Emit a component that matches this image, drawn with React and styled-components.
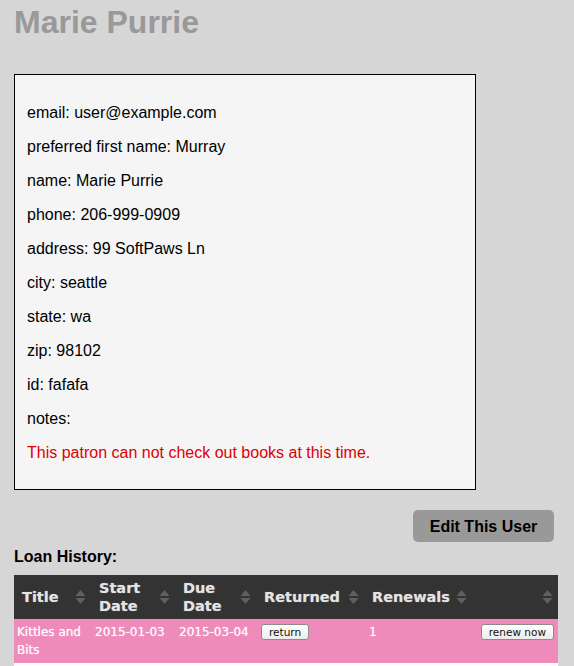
import React from 'react';
import styled, { createGlobalStyle } from 'styled-components';

const GlobalStyle = createGlobalStyle`
  html, body {
    margin: 0;
    padding: 0;
    background: #d6d6d6;
  }
  body {
    font-family: "Liberation Sans", Arial, sans-serif;
    color: #000;
  }
`;

const Page = styled.div`
  padding: 0 16px 0 14px;
`;

const Name = styled.h1`
  margin: 0;
  padding-top: 4px;
  font-size: 32px;
  line-height: 37px;
  font-weight: bold;
  color: #999;
`;

const InfoBox = styled.div`
  margin-top: 33px;
  width: 436px;
  padding: 13px 12px 11px;
  background: #f5f5f5;
  border: 1px solid #000;
`;

const Field = styled.p`
  margin: 16px 0;
  font-size: 16px;
  line-height: 18px;
  color: ${(p) => (p.$warn ? '#dd0000' : '#000')};
`;

const Actions = styled.div`
  display: flex;
  justify-content: flex-end;
  padding-right: 4px;
  margin-top: 20px;
`;

const EditButton = styled.button`
  height: 32px;
  width: 141px;
  border: none;
  border-radius: 5px;
  background: #999;
  color: #000;
  font-family: "Liberation Sans", Arial, sans-serif;
  font-size: 16px;
  font-weight: bold;
  padding-top: 2px;
  cursor: pointer;
`;

const SectionTitle = styled.h3`
  margin: 6px 0 9px;
  font-size: 16px;
  line-height: 18px;
  font-weight: bold;
`;

const Table = styled.table`
  width: 544px;
  border-collapse: collapse;
  table-layout: fixed;
  font-family: "DejaVu Sans", Verdana, sans-serif;
`;

const Th = styled.th`
  background: #333;
  color: #e4e4e4;
  font-size: 14.5px;
  font-weight: bold;
  line-height: 18px;
  text-align: left;
  padding: 4px 5px 4px 8px;
  text-shadow: 0 0 1px rgba(255, 255, 255, 0.45);
`;

const ThInner = styled.div`
  display: flex;
  align-items: center;
  justify-content: space-between;
  gap: 2px;
`;

const Row = styled.tr`
  background: ${(p) => p.$bg};
  height: ${(p) => p.$h || 44}px;
`;

const Td = styled.td`
  color: #fff;
  font-size: 12px;
  line-height: 18px;
  vertical-align: top;
  text-align: ${(p) => p.$align || 'left'};
  padding: 4px 4px 4px ${(p) => p.$pl ?? 4}px;
  text-shadow: 0 0 1px rgba(255, 255, 255, 0.6);
`;

const SmallButton = styled.button`
  height: 16px;
  padding: 0 7px;
  border: 1px solid #8c8c8c;
  border-radius: 3px;
  background: linear-gradient(#ffffff, #ececec);
  color: #111;
  font-family: "DejaVu Sans", Verdana, sans-serif;
  font-size: 10.5px;
  line-height: 14px;
  margin-top: 1px;
`;

function SortIcon() {
  return (
    <svg width="11" height="16" viewBox="0 0 11 16">
      <path d="M5.5 1 L10.5 7 L0.5 7 Z" fill="#606060" />
      <path d="M5.5 15 L10.5 9 L0.5 9 Z" fill="#606060" />
    </svg>
  );
}

const fields = [
  ['email', 'user@example.com'],
  ['preferred first name', 'Murray'],
  ['name', 'Marie Purrie'],
  ['phone', '206-999-0909'],
  ['address', '99 SoftPaws Ln'],
  ['city', 'seattle'],
  ['state', 'wa'],
  ['zip', '98102'],
  ['id', 'fafafa'],
  ['notes', ''],
];

const columns = [
  { label: 'Title', width: 77 },
  { label: ['Start', 'Date'], width: 84 },
  { label: ['Due', 'Date'], width: 81 },
  { label: 'Returned', width: 108 },
  { label: 'Renewals', width: 108 },
  { label: '', width: 86 },
];

export default function App() {
  return (
    <>
      <GlobalStyle />
      <Page>
        <Name>Marie Purrie</Name>
        <InfoBox>
          {fields.map(([k, v]) => (
            <Field key={k}>
              {k}: {v}
            </Field>
          ))}
          <Field $warn>This patron can not check out books at this time.</Field>
        </InfoBox>
        <Actions>
          <EditButton>Edit This User</EditButton>
        </Actions>
        <SectionTitle>Loan History:</SectionTitle>
        <Table>
          <colgroup>
            {columns.map((c, i) => (
              <col key={i} style={{ width: c.width }} />
            ))}
          </colgroup>
          <thead>
            <tr>
              {columns.map((c, i) => (
                <Th key={i}>
                  <ThInner>
                    <span>
                      {Array.isArray(c.label) ? (
                        <>
                          {c.label[0]}
                          <br />
                          {c.label[1]}
                        </>
                      ) : (
                        c.label
                      )}
                    </span>
                    <SortIcon />
                  </ThInner>
                </Th>
              ))}
            </tr>
          </thead>
          <tbody>
            <Row $bg="#ef8bbb">
              <Td $pl={3}>Kittles and Bits</Td>
              <Td>2015-01-03</Td>
              <Td>2015-03-04</Td>
              <Td $pl={5}>
                <SmallButton>return</SmallButton>
              </Td>
              <Td $pl={5}>1</Td>
              <Td $align="right">
                <SmallButton>renew now</SmallButton>
              </Td>
            </Row>
            <Row $bg="#ffffff">
              <Td />
              <Td />
              <Td />
              <Td />
              <Td />
              <Td />
            </Row>
          </tbody>
        </Table>
      </Page>
    </>
  );
}
